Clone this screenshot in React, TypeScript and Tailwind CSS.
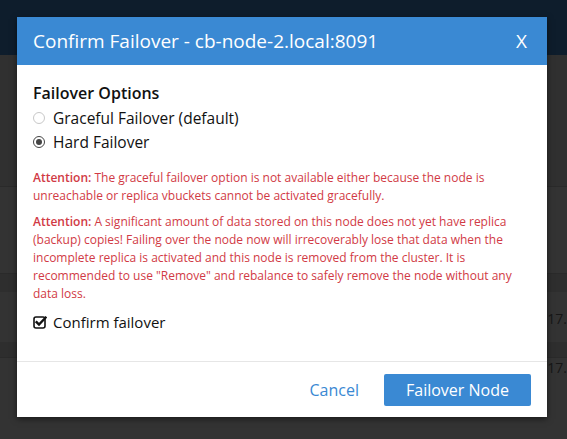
import { useState } from 'react';

function CheckSquare() {
  return (
    <svg width="14" height="14" viewBox="0 0 14 14" className="shrink-0">
      <rect x="1" y="2" width="11" height="11" rx="2" fill="none" stroke="#111" strokeWidth="1.6" />
      <path d="M3.6 7.2 L6 9.6 L12.6 2.6" fill="none" stroke="#111" strokeWidth="2.4" strokeLinecap="square" />
    </svg>
  );
}

function Radio({ checked }: { checked: boolean }) {
  return (
    <span
      className={
        'flex h-[12px] w-[12px] shrink-0 items-center justify-center rounded-full border ' +
        (checked ? 'border-[#444]' : 'border-[#c8c8c8]')
      }
    >
      {checked && <span className="h-[6px] w-[6px] rounded-full bg-[#444]" />}
    </span>
  );
}

export default function App() {
  const [mode, setMode] = useState<'graceful' | 'hard'>('hard');

  return (
    <div
      className="relative h-[439px] w-[567px] overflow-hidden bg-[#333333]"
      style={{ fontFamily: '"Open Sans", "Liberation Sans", sans-serif' }}
    >
      {/* page behind the dialog */}
      <div className="h-[55px] bg-[#0e1d2c]" />
      <div className="flex flex-col text-[14px] text-[#161616]">
        <div className="h-[132px] border-b border-[#2a2a2a] bg-[#303030]" />
        <div className="h-[87px] border-b border-[#2a2a2a]" />
        <div className="h-[18px] bg-[#2e2e2e]" />
        <div className="flex h-[50px] items-center justify-end pt-[2px]">(17.</div>
        <div className="h-[16px] border-b border-[#2a2a2a] bg-[#2e2e2e]" />
        <div className="flex h-[18px] items-center justify-end">(17.</div>
      </div>

      {/* dialog */}
      <div className="absolute left-[17px] top-[17px] w-[530px] bg-white shadow-[0_2px_6px_rgba(0,0,0,0.5)]">
        <div className="flex h-[48px] items-center justify-between bg-[#3a89d3] pl-[16px] pr-[20px] text-white">
          <h2 className="text-[19px] leading-none">Confirm Failover - cb-node-2.local:8091</h2>
          <span className="text-[19px] leading-none">X</span>
        </div>

        <div className="px-[16px] pt-[18px] pb-[29px]">
          <h3 className="text-[16px] font-semibold leading-[20px] text-[#111]">Failover Options</h3>
          <label className="mt-[5px] flex items-center gap-[8px] text-[15.5px] leading-[20px] text-[#111]" onClick={() => setMode('graceful')}>
            <Radio checked={mode === 'graceful'} />
            Graceful Failover (default)
          </label>
          <label className="mt-[4px] flex items-center gap-[8px] text-[15.5px] leading-[20px] text-[#111]" onClick={() => setMode('hard')}>
            <Radio checked={mode === 'hard'} />
            Hard Failover
          </label>

          <p className="mt-[17px] text-[12px] leading-[18px] text-[#d13a45]">
            <span className="font-semibold">Attention:</span> The graceful failover option is not available either because the node is unreachable or replica vbuckets cannot be activated gracefully.
          </p>
          <p className="mt-[8px] text-[12px] leading-[18px] text-[#d13a45]">
            <span className="font-semibold">Attention:</span> A significant amount of data stored on this node does not yet have replica (backup) copies! Failing over the node now will irrecoverably lose that data when the incomplete replica is activated and this node is removed from the cluster. It is recommended to use "Remove" and rebalance to safely remove the node without any data loss.
          </p>

          <label className="mt-[9px] flex items-center gap-[6px] text-[15px] leading-[20px] text-[#111]">
            <CheckSquare />
            Confirm failover
          </label>
        </div>

        <div className="flex h-[56px] items-center justify-end gap-[25px] border-t border-[#e6e6e6] pr-[16px]">
          <button className="text-[16px] text-[#3a89d3]">Cancel</button>
          <button className="h-[32px] w-[147px] rounded-[2px] bg-[#3a89d3] text-[16px] text-white">Failover Node</button>
        </div>
      </div>
    </div>
  );
}
